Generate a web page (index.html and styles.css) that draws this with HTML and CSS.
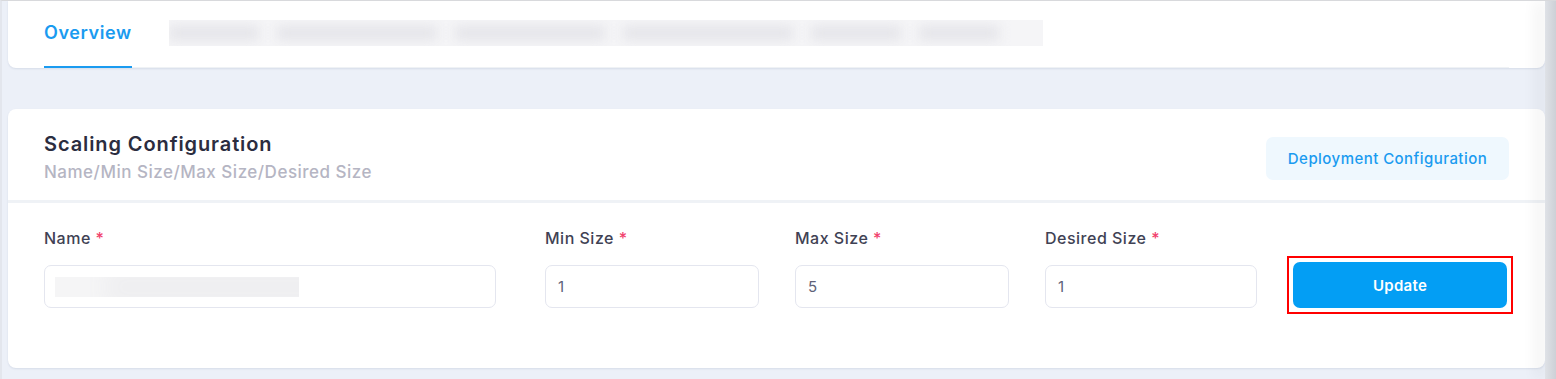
FILE: index.html
```html
<!DOCTYPE html>
<html lang="en">
<head>
  <meta charset="UTF-8">
  <meta name="viewport" content="width=device-width, initial-scale=1.0">
  <title>Scaling Configuration</title>
  <link rel="stylesheet" href="styles.css">
</head>
<body>
  <div class="frame">
    <div class="page">
      <div class="card nav-card">
        <div class="tabs">
          <a class="tab active">Overview</a>
          <div class="tab-blur">
            <span style="width: 90px"></span>
            <span style="width: 160px"></span>
            <span style="width: 150px"></span>
            <span style="width: 170px"></span>
            <span style="width: 90px"></span>
            <span style="width: 80px"></span>
          </div>
        </div>
      </div>

      <div class="card">
        <div class="card-header">
          <div>
            <div class="card-title">Scaling Configuration</div>
            <div class="card-subtitle">Name/Min Size/Max Size/Desired Size</div>
          </div>
          <button class="btn-light">Deployment Configuration</button>
        </div>
        <div class="card-body">
          <div class="form-row">
            <div class="field">
              <label>Name <span class="req">*</span></label>
              <div class="input input-name"><span class="blurred"></span></div>
            </div>
            <div class="field">
              <label>Min Size <span class="req">*</span></label>
              <input type="text" value="1">
            </div>
            <div class="field">
              <label>Max Size <span class="req">*</span></label>
              <input type="text" value="5">
            </div>
            <div class="field">
              <label>Desired Size <span class="req">*</span></label>
              <input type="text" value="1">
            </div>
            <div class="field field-btn">
              <div class="btn-frame">
                <button class="btn-primary">Update</button>
              </div>
            </div>
          </div>
        </div>
      </div>
    </div>
    <div class="edge"></div>
  </div>
</body>
</html>
```

FILE: styles.css
```css
body {
  margin: 0;
  font-family: 'Inter', 'Open Sans', sans-serif;
  background: #ecf0f8;
  border-top: 1px solid #d8d9dc;
  border-left: 2px solid #e3e6ed;
  height: 378px;
  overflow: hidden;
}
.frame {
  display: flex;
  height: 100%;
}
.page {
  flex: 1;
  min-width: 0;
  padding: 0 0 0 6px;
}
.edge {
  width: 11px;
  flex-shrink: 0;
  background: linear-gradient(90deg, #dfe2e7, #cdd0d6);
  box-shadow: -10px 0 14px rgba(0, 0, 0, 0.05);
  position: relative;
  z-index: 1;
}
.card {
  background: #fff;
  border-radius: 8px;
  box-shadow: 0 1px 2px rgba(60, 80, 120, 0.12);
}
.nav-card {
  border-radius: 0 0 8px 8px;
  padding: 0 36px;
  margin-bottom: 41px;
}
.tabs {
  display: flex;
  align-items: center;
  height: 66px;
  border-bottom: 1px solid #eff2f5;
}
.tab {
  height: 100%;
  display: flex;
  align-items: center;
  box-sizing: border-box;
  padding-bottom: 3px;
  font-size: 18px;
  font-weight: 600;
  letter-spacing: 0.6px;
  color: #1a9bf0;
  border-bottom: 2px solid #1a9bf0;
  margin-bottom: -1px;
}
.tab-blur {
  margin-left: 37px;
  width: 874px;
  height: 26px;
  margin-top: -3px;
  background: #f5f5f7;
  display: flex;
  gap: 18px;
  align-items: center;
  overflow: hidden;
}
.tab-blur span {
  height: 14px;
  background: #e4e4e9;
  filter: blur(6px);
}
.card-header {
  display: flex;
  justify-content: space-between;
  align-items: center;
  padding: 21px 36px 14px;
  border-bottom: 3px solid #eff2f6;
}
.card-title {
  font-size: 20px;
  font-weight: 600;
  letter-spacing: 0.9px;
  color: #2b2d3f;
  line-height: 28px;
}
.card-subtitle {
  font-size: 17px;
  font-weight: 500;
  letter-spacing: 0.5px;
  color: #b5b5c3;
  line-height: 28px;
}
.btn-light {
  font-family: inherit;
  width: 243px;
  height: 43px;
  border: none;
  border-radius: 7px;
  background: #eff8fe;
  color: #1a9bf0;
  font-size: 15px;
  font-weight: 500;
  letter-spacing: 0.45px;
}
.card-body {
  padding: 25px 36px 60px;
}
.form-row {
  display: grid;
  grid-template-columns: 465px 214px 214px 212px 216px;
  column-gap: 36px;
}
.field label {
  display: block;
  height: 20px;
  line-height: 20px;
  margin-bottom: 17px;
  font-size: 16px;
  font-weight: 500;
  letter-spacing: 0.5px;
  color: #3f4254;
}
.req {
  color: #f1416c;
}
input, .input {
  box-sizing: border-box;
  width: 100%;
  height: 43px;
  border: 1px solid #e4e6ef;
  border-radius: 7px;
  padding: 0 12px;
  font-family: inherit;
  font-size: 15px;
  color: #5e6278;
  outline: none;
}
.input-name {
  width: 452px;
  display: flex;
  align-items: center;
  padding-left: 10px;
}
.blurred {
  width: 244px;
  height: 20px;
  background: #efeff1;
  box-shadow: inset 60px 0 20px -10px #f5f5f6;
}
.field-btn {
  padding-top: 28px;
  margin-left: -6px;
}
.btn-frame {
  width: 226px;
  box-sizing: border-box;
  border: 2px solid #f00;
  padding: 4px;
  margin-bottom: -6px;
}
.btn-primary {
  display: block;
  font-family: inherit;
  width: 100%;
  height: 46px;
  border: none;
  border-radius: 7px;
  background: #039ef4;
  color: #fff;
  font-size: 15px;
  font-weight: 600;
  letter-spacing: 0.3px;
}
```
